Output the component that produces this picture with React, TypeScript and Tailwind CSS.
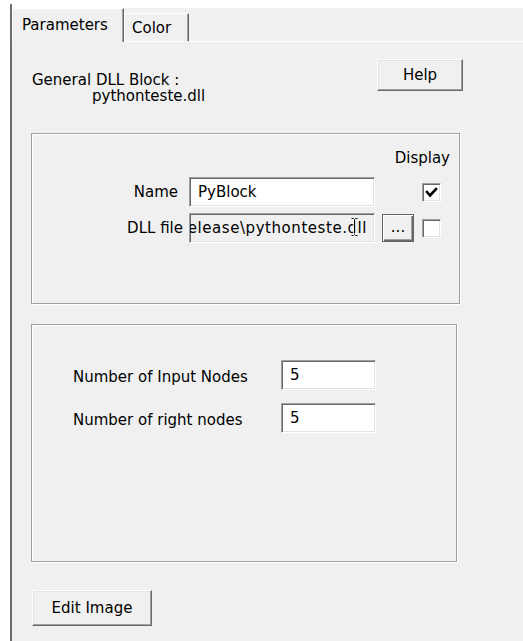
import React from "react";

const raised =
  "border border-t-white border-l-white border-b-[#696969] border-r-[#696969] shadow-[inset_-1px_-1px_0_#a0a0a0,inset_1px_1px_0_#e3e3e3] bg-[#f0f0f0]";
const sunken =
  "border border-t-[#a0a0a0] border-l-[#a0a0a0] border-b-white border-r-white shadow-[inset_1px_1px_0_#696969,inset_-1px_-1px_0_#e3e3e3]";
const etched =
  "border border-[#a0a0a0] shadow-[inset_1px_1px_0_#ffffff,1px_1px_0_#ffffff]";

function CheckBox({ checked }: { checked?: boolean }) {
  return (
    <div className={`w-[19px] h-[19px] bg-white ${sunken} flex items-center justify-center`}>
      {checked && (
        <svg width="13" height="11" viewBox="0 0 13 11">
          <polyline points="2,5 5,8.5 11,2" fill="none" stroke="#000" strokeWidth="2.6" strokeLinecap="square" />
        </svg>
      )}
    </div>
  );
}

function IBeam() {
  return (
    <svg width="9" height="20" viewBox="0 0 9 20" className="absolute left-[160px] top-[3px]">
      <path
        d="M1.5 1.5h2l1 1 1-1h2M4.5 2.5v14M1.5 18.5h2l1-1 1 1h2"
        fill="none"
        stroke="#fff"
        strokeWidth="2.5"
      />
      <path d="M1.5 1.5h2l1 1 1-1h2M4.5 2.5v14M1.5 18.5h2l1-1 1 1h2" fill="none" stroke="#000" strokeWidth="1" />
    </svg>
  );
}

export default function App() {
  return (
    <div className="w-[523px] h-[641px] bg-white flex overflow-hidden font-['DejaVu_Sans',Verdana,sans-serif] text-[15px] text-black">
      <div className="w-[10px] shrink-0" />
      <div className="w-[2px] shrink-0 mt-[4px] bg-[#6d6d6d]" />
      <div className="flex-1 mt-[8px] bg-[#f0f0f0] flex flex-col">
        {/* tab strip */}
        <div className="flex items-end h-[34px] shrink-0">
          <div className="w-[112px] h-[34px] border-l border-t border-r border-l-white border-t-white border-r-[#696969] shadow-[inset_-1px_0_0_#a0a0a0] pl-[9px] pt-[7px] leading-[18px]">
            Parameters
          </div>
          <div className="w-[65px] h-[29px] border-l border-t border-r border-b border-l-white border-t-white border-b-white border-r-[#696969] shadow-[inset_-1px_0_0_#a0a0a0] pl-[7px] pt-[5px] leading-[18px]">
            Color
          </div>
          <div className="flex-1 border-b border-white" />
        </div>

        {/* header */}
        <div className="flex h-[91px] shrink-0">
          <div className="w-[365px] pl-[20px] pt-[30px] leading-[16px]">
            <div>General DLL Block :</div>
            <div className="pl-[60px]">pythonteste.dll</div>
          </div>
          <button className={`mt-[17px] w-[86px] h-[32px] ${raised} leading-[18px]`}>Help</button>
        </div>

        {/* name / dll group */}
        <div className={`ml-[19px] w-[429px] h-[171px] shrink-0 ${etched} flex flex-col`}>
          <div className="pt-[15px] pr-[9px] text-right leading-[18px]">Display</div>
          <div className="flex items-center h-[30px] mt-[10px]">
            <div className="w-[146px] text-right leading-[18px]">Name</div>
            <div className={`ml-[11px] w-[186px] h-[30px] bg-white ${sunken} flex items-center pl-[8px] leading-[18px]`}>
              PyBlock
            </div>
            <div className="ml-[47px]">
              <CheckBox checked />
            </div>
          </div>
          <div className="flex items-center h-[30px] mt-[6px]">
            <div className="w-[151px] text-right leading-[18px]">DLL file</div>
            <div
              className={`relative ml-[6px] w-[186px] h-[30px] bg-[#f0f0f0] ${sunken} overflow-hidden leading-[18px] whitespace-nowrap`}
            >
              <div className="absolute right-[7px] top-[5px] tracking-[0.55px]">elease\pythonteste.dll</div>
              <IBeam />
            </div>
            <button
              className="ml-[7px] w-[32px] h-[28px] bg-[#f0f0f0] border border-[#646464] shadow-[inset_1px_1px_0_#ffffff,inset_-1px_-1px_0_#696969,inset_-2px_-2px_0_#a0a0a0] leading-[18px] pb-[2px] flex items-center justify-center"
            >
              ...
            </button>
            <div className="ml-[8px]">
              <CheckBox />
            </div>
          </div>
        </div>

        {/* nodes group */}
        <div className={`mt-[20px] ml-[19px] w-[426px] h-[238px] shrink-0 ${etched} flex flex-col pt-[35px]`}>
          <div className="flex items-center h-[30px]">
            <div className="pl-[41px] w-[249px] pt-[3px] leading-[18px]">Number of Input Nodes</div>
            <div className={`w-[95px] h-[30px] bg-white ${sunken} flex items-center pl-[8px] leading-[18px]`}>5</div>
          </div>
          <div className="flex items-center h-[30px] mt-[13px]">
            <div className="pl-[41px] w-[249px] pt-[3px] leading-[18px]">Number of right nodes</div>
            <div className={`w-[95px] h-[30px] bg-white ${sunken} flex items-center pl-[8px] leading-[18px]`}>5</div>
          </div>
        </div>

        <button className={`mt-[28px] ml-[20px] w-[120px] h-[36px] shrink-0 ${raised} leading-[18px]`}>
          Edit Image
        </button>
      </div>
    </div>
  );
}
